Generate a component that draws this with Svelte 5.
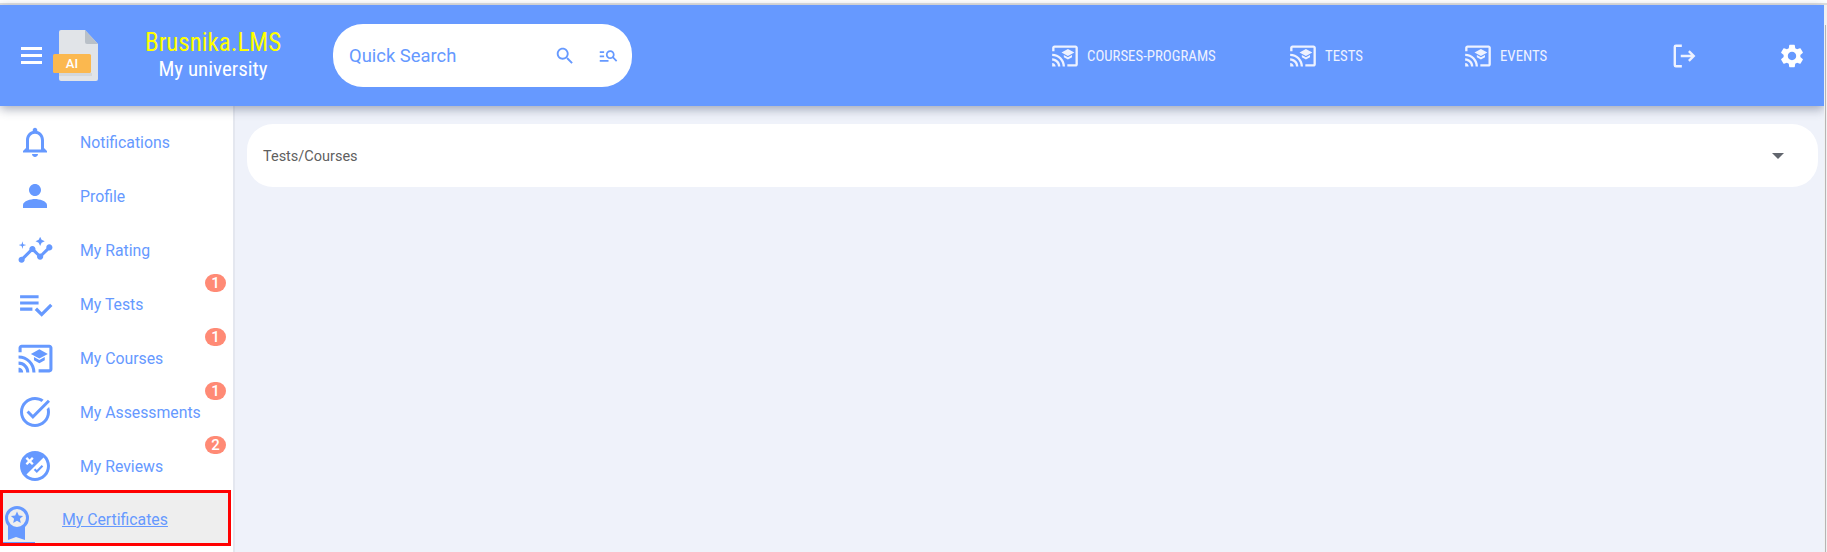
<script>
  const castIcon = "M21 3H3c-1.1 0-2 .9-2 2v3h2V5h18v14h-7v2h7c1.1 0 2-.9 2-2V5c0-1.1-.9-2-2-2zM1 18v3h3c0-1.66-1.34-3-3-3zm0-4v2c2.76 0 5 2.24 5 5h2c0-3.87-3.13-7-7-7zm0-4v2c4.97 0 9 4.03 9 9h2c0-6.08-4.93-11-11-11zm10 1.09v2L14.5 15l3.5-1.91v-2L14.5 13 11 11.09zM14.5 6L9 9l5.5 3L20 9l-5.5-3z";

  const menu = [
    { label: "Notifications", size: 36, d: "M12 22c1.1 0 2-.9 2-2h-4c0 1.1.9 2 2 2zm6-6v-5c0-3.07-1.64-5.64-4.5-6.32V4c0-.83-.67-1.5-1.5-1.5s-1.5.67-1.5 1.5v.68C7.63 5.36 6 7.92 6 11v5l-2 2v1h16v-1l-2-2zm-2 1H8v-6c0-2.48 1.51-4.5 4-4.5s4 2.02 4 4.5v6z" },
    { label: "Profile", size: 36, d: "M12 12c2.21 0 4-1.79 4-4s-1.79-4-4-4-4 1.79-4 4 1.79 4 4 4zm0 2c-2.67 0-8 1.34-8 4v2h16v-2c0-2.66-5.33-4-8-4z" },
    { label: "My Rating", size: 37, d: "M21 8c-1.45 0-2.26 1.44-1.93 2.51l-3.55 3.56c-.3-.09-.74-.09-1.04 0l-2.55-2.55C12.27 10.45 11.46 9 10 9c-1.45 0-2.27 1.44-1.93 2.52l-4.56 4.55C2.44 15.74 1 16.55 1 18c0 1.1.9 2 2 2 1.45 0 2.26-1.44 1.93-2.51l4.55-4.56c.3.09.74.09 1.04 0l2.55 2.55C12.73 16.55 13.54 18 15 18c1.45 0 2.27-1.44 1.93-2.52l3.56-3.55c1.07.33 2.51-.48 2.51-1.93 0-1.1-.9-2-2-2zM15 9l.94-2.07L18 6l-2.06-.93L15 3l-.92 2.07L12 6l2.08.93L15 9zM3.5 11L4 9l2-.5L4 8l-.5-2L3 8l-2 .5L3 9l.5 2z" },
    { label: "My Tests", size: 37, badge: 1, d: "M14 10H2v2h12v-2zm0-4H2v2h12V6zM2 16h8v-2H2v2zm19.500-4.500L23 13l-6.990 7-4.510-4.500L13 14l3.010 3 5.490-5.500z" },
    { label: "My Courses", size: 37, badge: 1, d: castIcon },
    { label: "My Assessments", size: 36, badge: 1, d: "M22 5.18L10.59 16.6l-4.24-4.24 1.41-1.41 2.83 2.83 10-10L22 5.18zm-2.21 5.04c.13.57.21 1.17.21 1.78 0 4.42-3.58 8-8 8s-8-3.58-8-8 3.58-8 8-8c1.58 0 3.04.46 4.28 1.25l1.44-1.44C16.1 2.67 14.13 2 12 2 6.48 2 2 6.48 2 12s4.48 10 10 10 10-4.48 10-10c0-1.19-.22-2.33-.6-3.39l-1.61 1.61z" },
    { label: "My Reviews", size: 36, badge: 2, d: "M12 2C6.48 2 2 6.48 2 12s4.48 10 10 10 10-4.48 10-10S17.52 2 12 2zM5.7 7.1l1.1-1.1 1.6 1.6L10 6l1.1 1.1-1.6 1.6 1.6 1.6-1.1 1.1-1.6-1.6-1.6 1.6-1.1-1.1 1.6-1.6-1.6-1.6zM12 20c-2.2 0-4.2-.9-5.7-2.3L17.7 6.3C19.1 7.8 20 9.8 20 12c0 4.4-3.6 8-8 8zm1.2-3.4l-2-2 1-1 1 1 3.3-3.3 1 1-4.3 4.3z" }
  ];

  const nav = [
    { label: "COURSES-PROGRAMS", width: 238 },
    { label: "TESTS", width: 175 },
    { label: "EVENTS", width: 207 }
  ];
</script>

<div class="topline"></div>

<header class="topbar">
  <button class="burger" aria-label="menu">
    <span></span><span></span><span></span>
  </button>

  <svg class="logo" width="45" height="51" viewBox="0 0 45 51">
    <path d="M8 0h24l13 14v35a2 2 0 0 1-2 2H8a2 2 0 0 1-2-2V2a2 2 0 0 1 2-2z" fill="#e1e4e8" />
    <path d="M32 0l13 14H34a2 2 0 0 1-2-2z" fill="#b9c0c8" />
    <rect x="6" y="43" width="33" height="3" fill="#d3d7dc" />
    <rect x="0" y="24" width="38" height="19" rx="1.500" fill="#fbb84f" />
    <text x="19" y="38" text-anchor="middle" class="logo-ai">AI</text>
  </svg>

  <div class="brand">
    <div class="brand-name">Brusnika.LMS</div>
    <div class="brand-sub">My university</div>
  </div>

  <div class="search">
    <span class="search-text">Quick Search</span>
    <svg class="search-ico" width="22" height="22" viewBox="0 0 24 24"><path d="M15.500 14h-.79l-.28-.27C15.410 12.590 16 11.110 16 9.500 16 5.910 13.090 3 9.500 3S3 5.910 3 9.500 5.910 16 9.500 16c1.610 0 3.090-.59 4.230-1.570l.27.28v.79l5 4.990L20.490 19l-4.990-5zm-6 0C7.010 14 5 11.990 5 9.500S7.010 5 9.500 5 14 7.010 14 9.500 11.990 14 9.500 14z" /></svg>
    <svg class="filter-ico" width="21" height="21" viewBox="0 0 24 24"><path d="M7 9H2V7h5v2zm0 3H2v2h5v-2zm13.590 7l-3.830-3.830c-.8.520-1.740.830-2.760.830-2.760 0-5-2.240-5-5s2.240-5 5-5 5 2.240 5 5c0 1.020-.31 1.960-.83 2.750L22 17.590 20.590 19zM17 11c0-1.650-1.350-3-3-3s-3 1.350-3 3 1.350 3 3 3 3-1.350 3-3zM2 19h10v-2H2v2z" /></svg>
  </div>

  <nav class="links">
    {#each nav as item}
      <div class="link" style="width: {item.width}px">
        <svg width="28" height="28" viewBox="0 0 24 24"><path d={castIcon} /></svg>
        <span>{item.label}</span>
      </div>
    {/each}
    <svg class="logout" width="26" height="26" viewBox="0 0 24 24" fill="none" stroke="#eef2ff" stroke-width="2.200">
      <path d="M10 2.500H4.500a1 1 0 0 0-1 1v17a1 1 0 0 0 1 1H10" />
      <path d="M9 12h12M16.500 7.500L21 12l-4.500 4.500" />
    </svg>
    <svg class="gear" width="28" height="28" viewBox="0 0 24 24"><path d="M19.140 12.940c.04-.3.060-.61.060-.94 0-.32-.02-.64-.07-.94l2.030-1.580c.18-.14.230-.41.120-.61l-1.920-3.320c-.12-.22-.37-.29-.59-.22l-2.390.960c-.5-.38-1.030-.7-1.620-.94l-.36-2.540c-.04-.24-.24-.41-.48-.41h-3.840c-.24 0-.43.170-.47.410l-.36 2.540c-.59.240-1.130.570-1.620.940l-2.390-.96c-.22-.08-.47 0-.59.220L2.740 8.870c-.12.210-.08.470.120.610l2.030 1.580c-.05.3-.09.630-.09.940s.02.640.07.940l-2.030 1.580c-.18.140-.23.410-.12.610l1.920 3.320c.12.220.37.290.59.220l2.390-.96c.5.380 1.030.7 1.620.940l.36 2.540c.05.240.24.410.48.410h3.840c.24 0 .44-.17.47-.41l.36-2.540c.59-.24 1.130-.56 1.620-.94l2.390.96c.22.080.47 0 .59-.22l1.920-3.320c.12-.22.070-.47-.12-.61l-2.010-1.580zM12 15.600c-1.980 0-3.600-1.620-3.600-3.600s1.620-3.600 3.600-3.600 3.600 1.620 3.600 3.600-1.620 3.600-3.600 3.600z" /></svg>
  </nav>
</header>

<div class="body">
  <aside class="sidebar">
    {#each menu as item}
      <div class="row">
        <span class="row-icon">
          <svg width={item.size} height={item.size} viewBox="0 0 24 24"><path d={item.d} /></svg>
        </span>
        <span class="row-text">{item.label}</span>
        {#if item.badge}
          <span class="badge">{item.badge}</span>
        {/if}
      </div>
    {/each}

    <div class="row cert">
      <svg class="cert-icon" width="32" height="37" viewBox="0 0 32 37">
        <path d="M5 18v16l8-3 9 3V18z" fill="#6699ff" />
        <circle cx="14" cy="12" r="10.500" fill="#eeeeee" stroke="#6699ff" stroke-width="3" />
        <path d="M14 5.500l1.800 4 4.300.4-3.200 2.900.9 4.200-3.800-2.200-3.800 2.200.9-4.200-3.200-2.900 4.300-.4z" fill="#6699ff" />
        <rect x="0" y="36" width="32" height="1" fill="#6699ff" />
      </svg>
      <a class="cert-text" href="#certificates">My Certificates</a>
    </div>
  </aside>

  <main class="content">
    <div class="card">
      <span>Tests/Courses</span>
      <i class="caret"></i>
    </div>
  </main>
</div>

<div class="scrollbar"></div>

<style>
  :global(body) {
    margin: 0;
    background: #eff2fa;
    font-family: Roboto, "Liberation Sans", sans-serif;
    overflow: hidden;
  }

  .topline {
    height: 3px;
    border-bottom: 2px solid #e2e2e2;
    background: #fff;
  }

  .topbar {
    position: relative;
    z-index: 2;
    display: flex;
    align-items: center;
    width: 1824px;
    height: 101px;
    background: #6699ff;
    box-shadow: 0 3px 10px rgba(60, 70, 100, 0.45);
  }

  .burger {
    display: flex;
    flex-direction: column;
    gap: 4px;
    width: 21px;
    margin-left: 21px;
    padding: 0;
    border: none;
    background: none;
  }

  .burger span {
    height: 3px;
    background: #fff;
  }

  .logo {
    margin-left: 11px;
  }

  .logo-ai {
    font-family: Roboto, sans-serif;
    font-size: 13px;
    font-weight: 500;
    fill: #fff;
  }

  .brand {
    width: 136px;
    margin-left: 47px;
    text-align: center;
    font-family: "Liberation Sans Narrow", Roboto, sans-serif;
    font-stretch: condensed;
    line-height: 26px;
  }

  .brand-name {
    color: #ffff00;
    font-size: 25px;
  }

  .brand-sub {
    color: #fff;
    font-size: 21px;
  }

  .search {
    display: flex;
    align-items: center;
    width: 270px;
    height: 63px;
    margin-left: 52px;
    padding: 0 13px 0 16px;
    background: #fff;
    border-radius: 30px;
    color: #6699ff;
    fill: #6699ff;
  }

  .search-text {
    flex: 1;
    font-size: 18.400px;
  }

  .filter-ico {
    margin-left: 22px;
  }

  .links {
    display: flex;
    align-items: center;
    margin-left: 419px;
    color: #eef2ff;
    fill: #eef2ff;
  }

  .link {
    display: flex;
    align-items: center;
    gap: 8px;
    font-family: "Liberation Sans Narrow", Roboto, sans-serif;
    font-stretch: condensed;
    font-size: 14.800px;
  }

  .logout {
    margin-right: 81px;
  }

  .gear {
    fill: #fff;
  }

  .body {
    display: flex;
    height: 446px;
  }

  .sidebar {
    flex: none;
    width: 233px;
    padding-top: 9px;
    background: #fff;
    border-right: 2px solid #e4e7ef;
  }

  .row {
    position: relative;
    display: flex;
    align-items: center;
    height: 54px;
    color: #6699ff;
    fill: #6699ff;
    font-size: 15.800px;
  }

  .row-icon {
    display: flex;
    justify-content: center;
    width: 70px;
    margin-right: 10px;
  }

  .badge {
    position: absolute;
    top: -3px;
    left: 205px;
    width: 21px;
    height: 18px;
    border-radius: 9px;
    background: #ff8a75;
    color: #fff;
    font-size: 15px;
    font-weight: 500;
    line-height: 18px;
    text-align: center;
  }

  .cert {
    box-sizing: border-box;
    width: 231px;
    height: 56px;
    margin-top: -3px;
    border: 3px solid #ff0000;
    background: #eeeeee;
  }

  .cert-icon {
    align-self: flex-end;
    flex: none;
  }

  .cert-text {
    margin-left: 27px;
    padding-top: 3px;
    color: #6699ff;
  }

  .content {
    flex: 1;
    padding: 18px 9px 0 12px;
  }

  .card {
    display: flex;
    align-items: center;
    justify-content: space-between;
    height: 63px;
    padding: 0 34px 0 16px;
    background: #fff;
    border-radius: 26px;
    color: #5f5f5f;
    font-size: 14.500px;
  }

  .card span {
    padding-top: 2px;
  }

  .caret {
    width: 0;
    height: 0;
    border-left: 6px solid transparent;
    border-right: 6px solid transparent;
    border-top: 6px solid #62666e;
  }

  .scrollbar {
    position: absolute;
    z-index: 3;
    top: 5px;
    right: 0;
    bottom: 0;
    width: 3px;
    height: 547px;
    background: linear-gradient(#f1f1f1 20px, #b5b5b5 20px) no-repeat 1px 0 / 1px 100%, #f1f1f1;
  }
</style>
